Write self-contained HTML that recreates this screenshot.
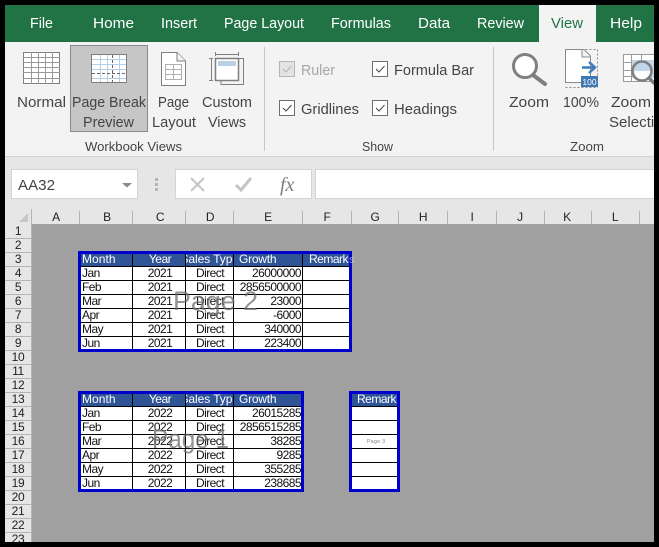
<!DOCTYPE html>
<html><head><meta charset="utf-8"><style>
html,body{margin:0;padding:0;background:#000;width:659px;height:547px;overflow:hidden}
svg{display:block;font-family:"Liberation Sans",sans-serif}
.t{font-size:15px;fill:#fff}
.r{font-size:15px;fill:#444}
.g{font-size:13px;fill:#444}
.h{font-size:12px;fill:#222;text-anchor:middle;letter-spacing:-.3px}
.c{font-size:12px;fill:#111;letter-spacing:-.55px}
.m{text-anchor:middle}
.e{text-anchor:end}
.w{fill:#fff;font-size:12px;letter-spacing:-.5px}
</style></head><body>
<svg width="659" height="547" viewBox="0 0 659 547" xmlns="http://www.w3.org/2000/svg">
<defs>
<clipPath id="main"><rect x="5" y="5" width="649" height="537"/></clipPath>
<clipPath id="d1"><rect x="186" y="254" width="47" height="12"/></clipPath>
<clipPath id="d2"><rect x="186" y="394" width="47" height="12"/></clipPath>
</defs>
<rect width="659" height="547" fill="#000"/>
<g clip-path="url(#main)">
<rect x="5" y="5" width="649" height="37" fill="#217346"/>
<rect x="5" y="42" width="649" height="114" fill="#f3f3f3"/>
<rect x="5" y="156" width="649" height="1" fill="#d2d2d2"/>
<rect x="5" y="157" width="649" height="67" fill="#e6e6e6"/>
<rect x="539" y="5" width="57" height="37" fill="#f3f3f3"/>

<text class="t" x="30" y="28" textLength="23" lengthAdjust="spacingAndGlyphs">File</text>
<text class="t" x="93" y="28" textLength="41" lengthAdjust="spacingAndGlyphs">Home</text>
<text class="t" x="161" y="28" textLength="36" lengthAdjust="spacingAndGlyphs">Insert</text>
<text class="t" x="224" y="28" textLength="80" lengthAdjust="spacingAndGlyphs">Page Layout</text>
<text class="t" x="331" y="28" textLength="60" lengthAdjust="spacingAndGlyphs">Formulas</text>
<text class="t" x="418" y="28" textLength="32" lengthAdjust="spacingAndGlyphs">Data</text>
<text class="t" x="477" y="28" textLength="47" lengthAdjust="spacingAndGlyphs">Review</text>
<text class="t" x="551" y="28" textLength="32" lengthAdjust="spacingAndGlyphs" style="fill:#217346">View</text>
<text class="t" x="610" y="28" textLength="32" lengthAdjust="spacingAndGlyphs">Help</text>

<!-- Page break highlight -->
<rect x="70.500" y="45.500" width="77" height="86" fill="#c6c6c6" stroke="#8a8a8a"/>

<!-- Normal icon -->
<g fill="none" stroke="#9a9a9a" stroke-width="1">
<rect x="23.500" y="52.500" width="36" height="31" fill="#fff" stroke="#7f7f7f"/>
<path d="M23 57.500H60M23 62.500H60M23 67.500H60M23 72.500H60M23 78.500H60M31.500 52V84M38.500 52V84M45.500 52V84M52.500 52V84"/>
</g>
<!-- Page break icon -->
<rect x="91.500" y="54.500" width="35" height="28" fill="#fff" stroke="#7f7f7f"/>
<path d="M92 59.500H126M92 64.500H126M92 69.500H126M92 78.500H126M100.500 55V82M107.500 55V82M119.500 55V82" fill="none" stroke="#b4cfe8"/>
<path d="M92 73.500H126M112.500 55V82" fill="none" stroke="#666" stroke-dasharray="3 2"/>
<!-- Page layout icon -->
<path d="M161.500 52.500H177L185.500 61V85.500H161.500Z" fill="#fff" stroke="#7f7f7f"/>
<path d="M177 52.500V61H185.500" fill="#f3f3f3" stroke="#7f7f7f"/>
<path d="M165 64.500H182M165 69.500H182M165 74.500H182M165 79.500H182M173.500 64V80M165.500 64V80M181.500 64V80" fill="none" stroke="#b0b0b0"/>
<!-- Custom views icon -->
<g fill="none" stroke="#7f7f7f" stroke-width="1">
<path d="M215.500 52V56M238.500 52V56M215 54.500H239"/>
<path d="M209 58.500H213M209 80.500H213M211.500 58V81"/>
<path d="M239 58.500H243.500V84.500H221V80"/>
<rect x="215.500" y="58.500" width="23" height="22" fill="#fff" stroke-width="1.500"/>
</g>
<rect x="218" y="61" width="18" height="5" fill="#b9cfe4"/>

<text class="r" x="17" y="107" textLength="49" lengthAdjust="spacingAndGlyphs">Normal</text>
<text class="r" x="72" y="107" textLength="74" lengthAdjust="spacingAndGlyphs">Page Break</text>
<text class="r" x="83" y="127" textLength="51" lengthAdjust="spacingAndGlyphs">Preview</text>
<text class="r" x="158" y="107" textLength="31" lengthAdjust="spacingAndGlyphs">Page</text>
<text class="r" x="152" y="127" textLength="44" lengthAdjust="spacingAndGlyphs">Layout</text>
<text class="r" x="202" y="107" textLength="50" lengthAdjust="spacingAndGlyphs">Custom</text>
<text class="r" x="208" y="127" textLength="38" lengthAdjust="spacingAndGlyphs">Views</text>
<text class="g" x="85" y="151" textLength="97" lengthAdjust="spacingAndGlyphs">Workbook Views</text>
<rect x="264" y="47" width="1" height="104" fill="#c6c6c6"/>

<!-- Checkboxes -->
<g fill="none" stroke-width="1">
<rect x="279.500" y="61.500" width="15" height="15" fill="#e3e3e3" stroke="#b5b5b5"/>
<path d="M283 69L286 72L291.500 66" stroke="#b5b5b5"/>
<rect x="279.500" y="100.500" width="15" height="15" fill="#fff" stroke="#6e6e6e"/>
<path d="M283 108L286 111L291.500 105" stroke="#444"/>
<rect x="372.500" y="61.500" width="15" height="15" fill="#fff" stroke="#6e6e6e"/>
<path d="M376 69L379 72L384.500 66" stroke="#444"/>
<rect x="372.500" y="100.500" width="15" height="15" fill="#fff" stroke="#6e6e6e"/>
<path d="M376 108L379 111L384.500 105" stroke="#444"/>
</g>
<text class="r" x="301" y="75" textLength="34" lengthAdjust="spacingAndGlyphs" style="fill:#a6a6a6">Ruler</text>
<text class="r" x="301" y="114" textLength="58" lengthAdjust="spacingAndGlyphs">Gridlines</text>
<text class="r" x="394" y="75" textLength="80" lengthAdjust="spacingAndGlyphs">Formula Bar</text>
<text class="r" x="394" y="114" textLength="63" lengthAdjust="spacingAndGlyphs">Headings</text>
<text class="g" x="362" y="151" textLength="31" lengthAdjust="spacingAndGlyphs">Show</text>
<rect x="493" y="47" width="1" height="104" fill="#c6c6c6"/>

<!-- Zoom icon -->
<circle cx="525" cy="66" r="11.500" fill="#fff" stroke="#7f7f7f" stroke-width="3"/>
<path d="M533 75L545 84" stroke="#7f7f7f" stroke-width="4" stroke-linecap="round"/>
<!-- 100% icon -->
<path d="M565.500 49.500H584L597.500 49.500V87.500H565.500" fill="none" stroke="#8a8a8a" stroke-dasharray="2 2"/>
<path d="M565.500 49.500H584L590.500 56V82.500H565.500Z" fill="#fff" stroke="#8a8a8a"/>
<path d="M582 49.500V57H590.500" fill="#f3f3f3" stroke="#8a8a8a"/>
<path d="M582 67.500H594M589 62L595 67.500L589 73" fill="none" stroke="#3f7cbb" stroke-width="2.500"/>
<rect x="581" y="76" width="17" height="11" fill="#3f78b3"/>
<text x="589.500" y="85" style="font-size:8.500px;fill:#fff;text-anchor:middle">100</text>
<!-- Zoom to selection icon -->
<rect x="623.500" y="54.500" width="34" height="27" fill="#fff" stroke="#9a9a9a"/>
<rect x="632" y="60" width="22" height="18" fill="#c2d6ea"/>
<path d="M623 62.500H632M623 70.500H632M623 76.500H632M631.500 54V82M641.500 54V60" fill="none" stroke="#9a9a9a"/>
<circle cx="642" cy="71" r="9.500" fill="none" stroke="#7f7f7f" stroke-width="2.500"/>
<path d="M634 71A8 8 0 0 1 650 71Z" fill="#c2d6ea"/>
<path d="M634 71A8 8 0 0 0 650 71Z" fill="#fff"/>
<path d="M649 78L656 85" stroke="#7f7f7f" stroke-width="3.500"/>

<text class="r" x="509" y="107" textLength="40" lengthAdjust="spacingAndGlyphs">Zoom</text>
<text class="r" x="563" y="107" textLength="36" lengthAdjust="spacingAndGlyphs">100%</text>
<text class="r" x="611" y="107" textLength="40" lengthAdjust="spacingAndGlyphs">Zoom</text>
<text class="r" x="609" y="127" textLength="62" lengthAdjust="spacingAndGlyphs">Selection</text>
<text class="g" x="570" y="151" textLength="34" lengthAdjust="spacingAndGlyphs">Zoom</text>

<!-- Formula bar -->
<rect x="11.500" y="169.500" width="126" height="29" fill="#fff" stroke="#d4d4d4"/>
<text x="18" y="190" textLength="37" lengthAdjust="spacingAndGlyphs" style="font-size:15px;fill:#444">AA32</text>
<path d="M122 183H132L127 187.500Z" fill="#8a8a8a"/>
<path d="M155 178h3v3h-3zM155 183h3v3h-3zM155 188h3v3h-3z" fill="#b4b4b4"/>
<rect x="175.500" y="169.500" width="136" height="29" fill="#fff" stroke="#d4d4d4"/>
<path d="M191 178L204 191M204 178L191 191" stroke="#c4c4c4" stroke-width="2"/>
<path d="M236 185L241 190L251 178" fill="none" stroke="#c4c4c4" stroke-width="3"/>
<text x="280" y="191" style="font-family:'Liberation Serif',serif;font-style:italic;font-size:20px;fill:#7f7f7f">fx</text>
<rect x="315.500" y="169.500" width="345" height="29" fill="#fff" stroke="#d4d4d4"/>

<!-- Column headers -->
<path d="M28 213V222H19Z" fill="#c8c8c8"/>
<path d="M31.500 211V224M79.500 211V224M132.500 211V224M185.500 211V224M233.500 211V224M302.500 211V224M351.500 211V224M398.500 211V224M447.500 211V224M496.500 211V224M544.500 211V224M591.500 211V224M639.500 211V224" stroke="#b4b4b4"/>
<text class="h" x="56" y="221">A</text><text class="h" x="107" y="221">B</text><text class="h" x="160" y="221">C</text><text class="h" x="210" y="221">D</text><text class="h" x="268" y="221">E</text><text class="h" x="327" y="221">F</text><text class="h" x="375" y="221">G</text><text class="h" x="423" y="221">H</text><text class="h" x="472" y="221">I</text><text class="h" x="520" y="221">J</text><text class="h" x="567" y="221">K</text><text class="h" x="615" y="221">L</text>

<!-- Sheet -->
<rect x="32" y="224" width="622" height="318" fill="#a0a0a0"/>
<rect x="5" y="224" width="26" height="318" fill="#e6e6e6"/>
<rect x="31" y="209" width="1" height="333" fill="#b4b4b4"/>
<path d="M5 238.500H31M5 252.500H31M5 266.500H31M5 280.500H31M5 294.500H31M5 308.500H31M5 322.500H31M5 336.500H31M5 350.500H31M5 364.500H31M5 378.500H31M5 392.500H31M5 406.500H31M5 420.500H31M5 434.500H31M5 448.500H31M5 462.500H31M5 476.500H31M5 490.500H31M5 504.500H31M5 518.500H31M5 532.500H31" stroke="#b4b4b4"/>
<text class="h" x="18" y="235">1</text><text class="h" x="18" y="249">2</text><text class="h" x="18" y="263">3</text><text class="h" x="18" y="277">4</text><text class="h" x="18" y="291">5</text><text class="h" x="18" y="305">6</text><text class="h" x="18" y="319">7</text><text class="h" x="18" y="333">8</text><text class="h" x="18" y="347">9</text><text class="h" x="18" y="361">10</text><text class="h" x="18" y="375">11</text><text class="h" x="18" y="389">12</text><text class="h" x="18" y="403">13</text><text class="h" x="18" y="417">14</text><text class="h" x="18" y="431">15</text><text class="h" x="18" y="445">16</text><text class="h" x="18" y="459">17</text><text class="h" x="18" y="473">18</text><text class="h" x="18" y="487">19</text><text class="h" x="18" y="501">20</text><text class="h" x="18" y="515">21</text><text class="h" x="18" y="529">22</text><text class="h" x="18" y="543">23</text>

<!-- Table 1 -->
<rect x="79" y="252" width="272" height="99" fill="#fff"/>
<rect x="79" y="252" width="272" height="14" fill="#2f5597"/>
<path d="M79 266.500H351M79 280.500H351M79 294.500H351M79 308.500H351M79 322.500H351M79 336.500H351M132.500 253V350M185.500 253V350M233.500 253V350M302.500 253V350" stroke="#000"/>
<rect x="79.500" y="252.500" width="271" height="98" fill="none" stroke="#0000cc" stroke-width="3"/>
<text class="w" x="82" y="263" textLength="33">Month</text>
<text class="w m" x="160" y="263">Year</text>
<text class="w m" x="209.500" y="263" clip-path="url(#d1)" textLength="58">Sales Type</text>
<text class="w" x="239" y="263" textLength="37">Growth</text>
<text class="w" x="309" y="263" textLength="39">Remark</text>
<text x="349" y="263" style="font-size:11px;fill:#d9d9d9;opacity:.7">s</text>
<text class="c" x="82" y="277">Jan</text><text class="c" x="82" y="291">Feb</text><text class="c" x="82" y="305">Mar</text><text class="c" x="82" y="319">Apr</text><text class="c" x="82" y="333">May</text><text class="c" x="82" y="347">Jun</text>
<text class="c m" x="160" y="277">2021</text><text class="c m" x="160" y="291">2021</text><text class="c m" x="160" y="305">2021</text><text class="c m" x="160" y="319">2021</text><text class="c m" x="160" y="333">2021</text><text class="c m" x="160" y="347">2021</text>
<text class="c m" x="210" y="277">Direct</text><text class="c m" x="210" y="291">Direct</text><text class="c m" x="210" y="305">Direct</text><text class="c m" x="210" y="319">Direct</text><text class="c m" x="210" y="333">Direct</text><text class="c m" x="210" y="347">Direct</text>
<text class="c e" x="301" y="277">26000000</text><text class="c e" x="301" y="291">2856500000</text><text class="c e" x="301" y="305">23000</text><text class="c e" x="301" y="319">-6000</text><text class="c e" x="301" y="333">340000</text><text class="c e" x="301" y="347">223400</text>
<text x="173" y="310" textLength="85" lengthAdjust="spacingAndGlyphs" style="font-size:27px;fill:#6e6e6e;opacity:.75">Page 2</text>

<!-- Table 2 -->
<rect x="79" y="392" width="224" height="99" fill="#fff"/>
<rect x="79" y="392" width="224" height="14" fill="#2f5597"/>
<path d="M79 406.500H303M79 420.500H303M79 434.500H303M79 448.500H303M79 462.500H303M79 476.500H303M132.500 393V490M185.500 393V490M233.500 393V490" stroke="#000"/>
<rect x="79.500" y="392.500" width="223" height="98" fill="none" stroke="#0000cc" stroke-width="3"/>
<text class="w" x="82" y="403" textLength="33">Month</text>
<text class="w m" x="160" y="403">Year</text>
<text class="w m" x="209.500" y="403" clip-path="url(#d2)" textLength="58">Sales Type</text>
<text class="w" x="239" y="403" textLength="37">Growth</text>
<text class="c" x="82" y="417">Jan</text><text class="c" x="82" y="431">Feb</text><text class="c" x="82" y="445">Mar</text><text class="c" x="82" y="459">Apr</text><text class="c" x="82" y="473">May</text><text class="c" x="82" y="487">Jun</text>
<text class="c m" x="160" y="417">2022</text><text class="c m" x="160" y="431">2022</text><text class="c m" x="160" y="445">2022</text><text class="c m" x="160" y="459">2022</text><text class="c m" x="160" y="473">2022</text><text class="c m" x="160" y="487">2022</text>
<text class="c m" x="210" y="417">Direct</text><text class="c m" x="210" y="431">Direct</text><text class="c m" x="210" y="445">Direct</text><text class="c m" x="210" y="459">Direct</text><text class="c m" x="210" y="473">Direct</text><text class="c m" x="210" y="487">Direct</text>
<text class="c e" x="301" y="417">26015285</text><text class="c e" x="301" y="431">2856515285</text><text class="c e" x="301" y="445">38285</text><text class="c e" x="301" y="459">9285</text><text class="c e" x="301" y="473">355285</text><text class="c e" x="301" y="487">238685</text>
<text x="152" y="448" textLength="77" lengthAdjust="spacingAndGlyphs" style="font-size:27px;fill:#6e6e6e;opacity:.75">Page 1</text>

<!-- Table 3 -->
<rect x="351" y="392" width="47" height="99" fill="#fff"/>
<rect x="351" y="392" width="47" height="14" fill="#2f5597"/>
<path d="M351 406.500H398M351 420.500H398M351 434.500H398M351 448.500H398M351 462.500H398M351 476.500H398" stroke="#000"/>
<rect x="350.500" y="392.500" width="48" height="98" fill="none" stroke="#0000cc" stroke-width="3"/>
<text class="w" x="357" y="403" textLength="39">Remark</text>
<text x="367" y="443" textLength="18" style="font-size:5px;fill:#777">Page 3</text>
</g>
</svg>
</body></html>
